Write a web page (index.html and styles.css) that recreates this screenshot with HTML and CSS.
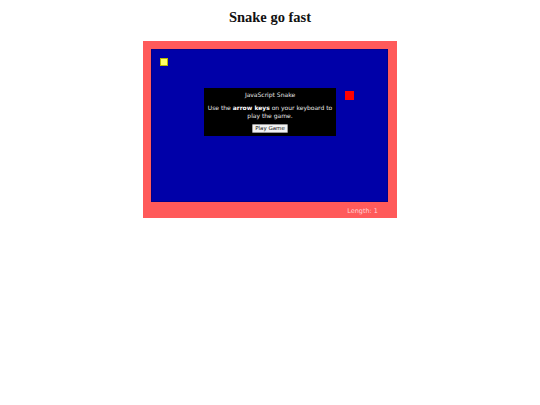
FILE: index.html
```html
<!DOCTYPE html>
<html>
<head>
<meta charset="utf-8">
<title>Snake go fast</title>
<link rel="stylesheet" href="styles.css">
</head>
<body>
<h1 class="title">Snake go fast</h1>
<div class="game">
  <div class="board">
    <div class="snake-block"></div>
    <div class="food"></div>
    <div class="dialog">
      <div class="dialog-title">JavaScript Snake</div>
      <p class="dialog-text">Use the <strong>arrow keys</strong> on your keyboard to<br>play the game.</p>
      <button class="play-btn">Play Game</button>
    </div>
  </div>
  <div class="length">Length: 1</div>
</div>
</body>
</html>
```
FILE: styles.css
```css
html, body {
  margin: 0;
  padding: 0;
  background: #ffffff;
}
.title {
  font-family: "Liberation Serif", "Times New Roman", serif;
  font-size: 14.5px;
  font-weight: bold;
  text-align: center;
  color: #111;
  margin: 8px 0 0 0;
  line-height: 18px;
}
.game {
  width: 237px;
  margin: 15px auto 0 auto;
  padding: 8px 9px 0 8px;
  height: 169px;
  background: #ff5a5a;
}
.board {
  position: relative;
  width: 237px;
  height: 153px;
  background: #0000a8;
  box-sizing: border-box;
  border: 1px solid #00008a;
}
.snake-block {
  position: absolute;
  left: 8px;
  top: 8px;
  width: 8px;
  height: 8px;
  box-sizing: border-box;
  background: #ffff66;
  border: 1px solid #b8b800;
}
.food {
  position: absolute;
  left: 193px;
  top: 41px;
  width: 9px;
  height: 9px;
  background: #ff0000;
}
.dialog {
  position: absolute;
  left: 52px;
  top: 38px;
  width: 132px;
  height: 48px;
  background: #000000;
  color: #e8e8e8;
  font-family: "DejaVu Sans", Verdana, sans-serif;
  font-size: 6px;
  text-align: center;
  box-sizing: border-box;
  padding-top: 3px;
}
.dialog-title {
  line-height: 8px;
}
.dialog-text {
  margin: 5px 0 0 0;
  line-height: 7.5px;
  white-space: nowrap;
}
.dialog-text strong {
  color: #ffffff;
}
.play-btn {
  display: block;
  margin: 5px auto 0 auto;
  font-family: "DejaVu Sans", Verdana, sans-serif;
  font-size: 5.5px;
  padding: 0 2px;
  height: 9px;
  line-height: 7px;
  background: #f2f2f2;
  color: #111;
  border: 1px solid #999;
  border-radius: 1px;
}
.length {
  font-family: "DejaVu Sans", Verdana, sans-serif;
  font-size: 6.5px;
  color: #ffd6d6;
  text-align: right;
  padding-right: 10px;
  line-height: 8px;
  margin-top: 5px;
}
```
